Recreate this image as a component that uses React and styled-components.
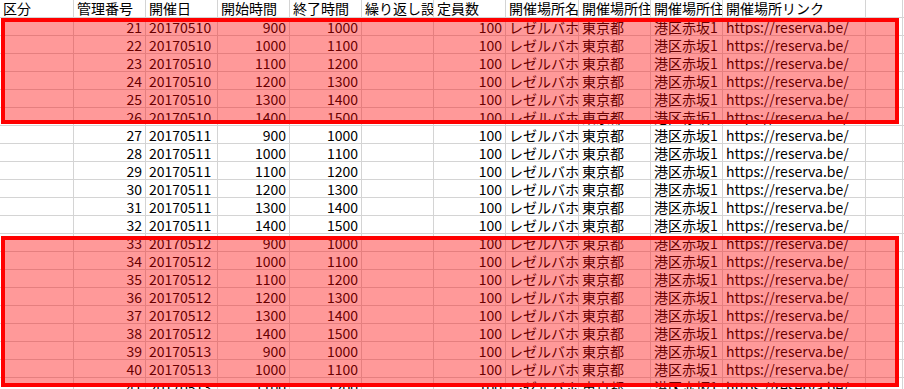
import styled, { createGlobalStyle } from 'styled-components';

const GlobalStyle = createGlobalStyle`
  html, body {
    margin: 0;
    padding: 0;
    background: #fff;
    overflow: hidden;
  }
  body {
    font-family: "Noto Sans CJK JP", "Noto Sans", sans-serif;
  }
`;

const COLS = [74, 72, 72, 72, 72, 72, 72, 73, 72, 72, 143, 37];

const Sheet = styled.div`
  position: relative;
  width: 904px;
  height: 389px;
  overflow: hidden;
`;

const Grid = styled.div`
  display: grid;
  grid-template-columns: ${COLS.map((w) => w + 'px').join(' ')} 1fr;
  grid-auto-rows: 18px;
`;

const Cell = styled.div`
  box-sizing: border-box;
  border-right: 1px solid #d4d4d4;
  border-bottom: 1px solid #d4d4d4;
  padding: 0 ${(p) => (p.$num ? '3px' : '0')} 0 ${(p) => (p.$num ? '0' : '3px')};
  font-size: 14px;
  line-height: ${(p) => (p.$head ? '16px' : '19px')};
  color: #000;
  white-space: nowrap;
  overflow: hidden;
  text-align: ${(p) => (p.$num ? 'right' : 'left')};
`;

const Highlight = styled.div`
  position: absolute;
  left: 1px;
  width: 898px;
  box-sizing: border-box;
  border: 4px solid #ff0000;
  background: rgba(255, 0, 0, 0.4);
  pointer-events: none;
`;

const headers = [
  '区分', '管理番号', '開催日', '開始時間', '終了時間', '繰り返し設定', '定員数',
  '開催場所名', '開催場所住所1', '開催場所住所2', '開催場所リンク', '', '',
];

const rows = [];
const dates = ['20170510', '20170511', '20170512', '20170513'];
for (let id = 21; id <= 41; id++) {
  const k = id - 21;
  const day = Math.floor(k / 6);
  const start = 900 + (k % 6) * 100;
  rows.push({ id, date: dates[day], start, end: start + 100 });
}

const App = () => (
  <Sheet>
    <GlobalStyle />
    <Grid>
      {headers.map((h, i) => (
        <Cell key={'h' + i} $head>{h}</Cell>
      ))}
      {rows.map((r) => [
        <Cell key={r.id + 'a'} />,
        <Cell key={r.id + 'b'} $num>{r.id}</Cell>,
        <Cell key={r.id + 'c'}>{r.date}</Cell>,
        <Cell key={r.id + 'd'} $num>{r.start}</Cell>,
        <Cell key={r.id + 'e'} $num>{r.end}</Cell>,
        <Cell key={r.id + 'f'} />,
        <Cell key={r.id + 'g'} $num>100</Cell>,
        <Cell key={r.id + 'h'}>レゼルバホール</Cell>,
        <Cell key={r.id + 'i'}>東京都</Cell>,
        <Cell key={r.id + 'j'}>港区赤坂1</Cell>,
        <Cell key={r.id + 'k'}>https://reserva.be/</Cell>,
        <Cell key={r.id + 'l'} />,
        <Cell key={r.id + 'm'} />,
      ])}
    </Grid>
    <Highlight style={{ top: 18, height: 106 }} />
    <Highlight style={{ top: 236, height: 151 }} />
  </Sheet>
);

export default App;
